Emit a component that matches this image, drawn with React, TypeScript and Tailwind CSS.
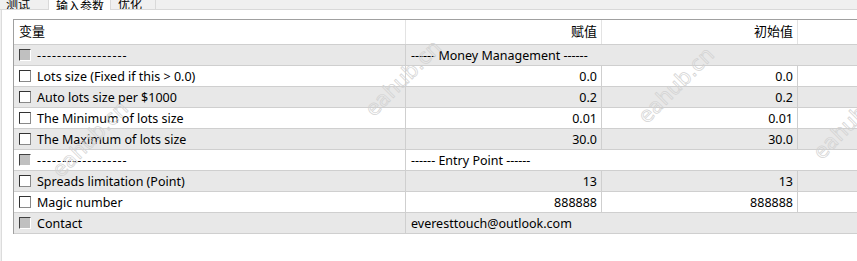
import React from "react";

type Row =
  | { kind: "param"; name: string; value: string; initial: string }
  | { kind: "span"; name: string; text: string };

const rows: Row[] = [
  { kind: "span", name: "------------------", text: "------ Money Management ------" },
  { kind: "param", name: "Lots size (Fixed if this > 0.0)", value: "0.0", initial: "0.0" },
  { kind: "param", name: "Auto lots size per $1000", value: "0.2", initial: "0.2" },
  { kind: "param", name: "The Minimum of lots size", value: "0.01", initial: "0.01" },
  { kind: "param", name: "The Maximum of lots size", value: "30.0", initial: "30.0" },
  { kind: "span", name: "------------------", text: "------ Entry Point ------" },
  { kind: "param", name: "Spreads limitation (Point)", value: "13", initial: "13" },
  { kind: "param", name: "Magic number", value: "888888", initial: "888888" },
  { kind: "span", name: "Contact", text: "everesttouch@outlook.com" },
];

const font = "font-['Noto_Sans','Noto_Sans_CJK_SC',sans-serif]";

function Checkbox({ disabled }: { disabled?: boolean }) {
  return disabled ? (
    <span className="w-[12px] h-[12px] shrink-0 bg-[#c0c0c0] border-t border-l border-[#404040] border-r border-b border-r-white border-b-white" />
  ) : (
    <span className="w-[12px] h-[12px] shrink-0 bg-white border border-[#333333] border-r-[#8a8a8a] border-b-[#8a8a8a]" />
  );
}

const watermarks = [
  { left: "left-[42px]", top: "top-[124px]" },
  { left: "left-[355px]", top: "top-[63px]" },
  { left: "left-[628px]", top: "top-[70px]" },
  { left: "left-[803px]", top: "top-[106px]" },
];

export default function App() {
  return (
    <div className={`w-[857px] h-[261px] overflow-hidden bg-[#f0f0f0] text-[12.5px] text-black ${font} relative`}>
      {/* tabs */}
      <div className="h-[10px] flex border-b border-[#d9d9d9] leading-[14px] text-[12px]">
        <div className="w-[49px] h-[9px] overflow-hidden border-r border-[#d9d9d9] flex items-end pl-[6px]">
          <span className="-mb-[3px]">测试</span>
        </div>
        <div className="w-[62px] h-[10px] -mb-px overflow-hidden bg-white border-r border-[#d9d9d9] flex items-end pl-[7px]">
          <span className="-mb-[4px]">输入参数</span>
        </div>
        <div className="w-[45px] h-[9px] overflow-hidden border-r border-[#d9d9d9] flex items-end pl-[7px]">
          <span className="-mb-[3px]">优化</span>
        </div>
      </div>

      {/* panel */}
      <div className="ml-px h-[251px] bg-white border-l border-[#dcdcdc] pl-[11px] pt-[9px]">
        <div className="border-l border-t border-[#a0a0a0]">
          <div className="h-[25px] flex items-center border-b border-[#cfcfcf] text-[13px]">
            <div className="w-[392px] h-full flex items-center pl-[5px] border-r border-[#e3e3e3]">变量</div>
            <div className="w-[196px] h-full flex items-center justify-end pr-[4px] border-r border-[#e3e3e3]">赋值</div>
            <div className="w-[196px] h-full flex items-center justify-end pr-[4px] border-r border-[#e3e3e3]">初始值</div>
            <div className="flex-1" />
          </div>
          {rows.map((row, i) => (
            <div
              key={i}
              className={`h-[21px] flex border-b border-[#cfcfcf] ${i % 2 === 0 ? "bg-[#e8e8e8]" : "bg-white"}`}
            >
              <div className="w-[392px] h-full flex items-center gap-[6px] pl-[5px] border-r border-[#cfcfcf]">
                <Checkbox disabled={row.kind === "span"} />
                <span className={`whitespace-nowrap pt-[2px] ${row.name.startsWith("---") ? "tracking-[1px]" : ""}`}>
                  {row.name}
                </span>
              </div>
              {row.kind === "span" ? (
                <div className="flex-1 h-full flex items-center pl-[5px] pt-[2px] whitespace-nowrap">{row.text}</div>
              ) : (
                <>
                  <div className="w-[196px] h-full flex items-center justify-end pr-[4px] pt-[2px] border-r border-[#cfcfcf]">{row.value}</div>
                  <div className="w-[196px] h-full flex items-center justify-end pr-[4px] pt-[2px] border-r border-[#cfcfcf]">{row.initial}</div>
                  <div className="flex-1" />
                </>
              )}
            </div>
          ))}
        </div>
      </div>

      {/* watermark */}
      {watermarks.map((w, i) => (
        <span
          key={i}
          className={`absolute ${w.left} ${w.top} pointer-events-none -rotate-[45deg] text-[21px] font-['DejaVu_Sans',sans-serif] text-transparent [-webkit-text-stroke:0.7px_#d2d2d2] whitespace-nowrap`}
        >
          eahub.cn
        </span>
      ))}
    </div>
  );
}
